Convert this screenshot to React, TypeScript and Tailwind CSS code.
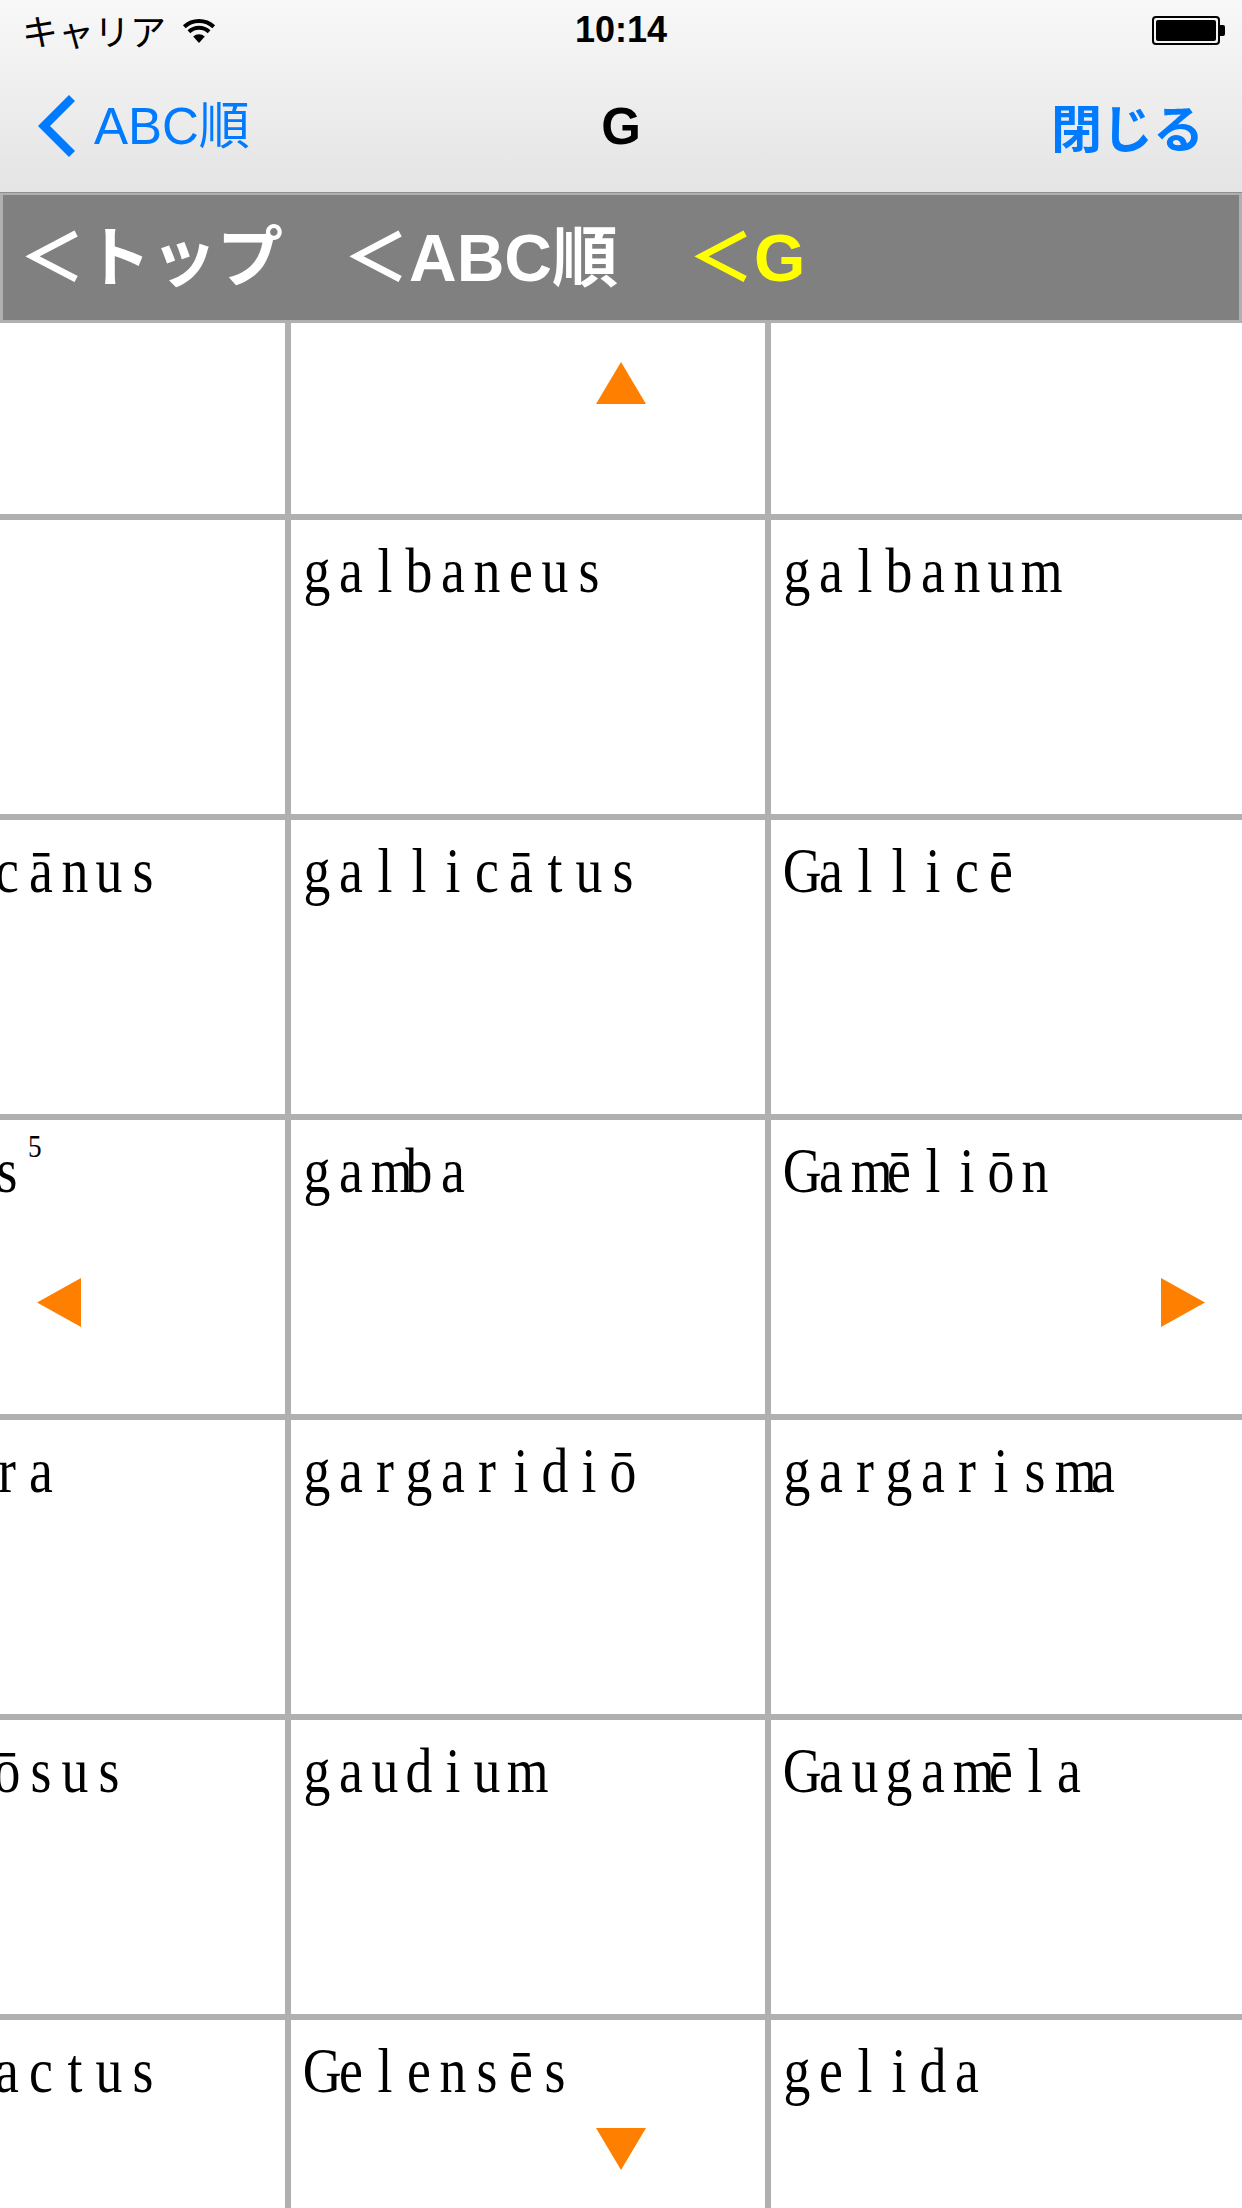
import React from "react";

const rows: { words: [string, string, string]; sup?: boolean }[] = [
  { words: ["galbanus", "galbaneus", "galbanum"] },
  { words: ["Gallicānus", "gallicātus", "Gallicē"] },
  { words: ["Gallus", "gamba", "Gamēliōn"], sup: true },
  { words: ["Gargara", "gargaridiō", "gargarisma"] },
  { words: ["gaudiōsus", "gaudium", "Gaugamēla"] },
  { words: ["gelefactus", "Gelensēs", "gelida"] },
];

function Word({ text, sup }: { text: string; sup?: boolean }) {
  return (
    <div className="whitespace-nowrap text-[64px] leading-none text-black [font-family:'Liberation_Serif',serif]">
      {Array.from(text).map((c, i) => (
        <span key={i} className="inline-block w-[34px] scale-x-[0.84] text-center">
          {c}
        </span>
      ))}
      {sup ? (
        <span className="relative -top-[9px] inline-block align-top text-[32px] leading-none pl-[3px] scale-x-[0.85]">5</span>
      ) : null}
    </div>
  );
}

function Cell({ text, sup }: { text?: string; sup?: boolean }) {
  return (
    <div className="h-full w-[474px] shrink-0 bg-white pl-[9px] pt-[19px] overflow-hidden">
      {text ? <Word text={text} sup={sup} /> : null}
    </div>
  );
}

function Wifi() {
  return (
    <svg width="38" height="28" viewBox="0 0 38 28">
      <path d="M19 27 L13.2 20.6 A8.6 8.6 0 0 1 24.8 20.6 Z" fill="#000" />
      <path d="M8.9 15.8 A14.8 14.8 0 0 1 29.1 15.8" stroke="#000" strokeWidth="4" fill="none" />
      <path d="M4.3 10.7 A21.5 21.5 0 0 1 33.7 10.7" stroke="#000" strokeWidth="4" fill="none" />
    </svg>
  );
}

export default function App() {
  return (
    <div className="relative flex h-[2208px] w-[1242px] flex-col overflow-hidden bg-white">
      {/* status + nav */}
      <div className="flex h-[193px] shrink-0 flex-col border-b border-[#8f8f8f] bg-gradient-to-b from-[#f8f8f8] to-[#e4e4e4]">
        <div className="relative flex h-[60px] items-center pl-[22px] pr-[17px]">
          <div className="flex items-center gap-[14px]">
            <span className="text-[36px] leading-none text-black [font-family:'Noto_Sans_CJK_JP',sans-serif]">キャリア</span>
            <Wifi />
          </div>
          <div className="flex-1" />
          <div className="flex items-center">
            <div className="h-[29px] w-[68px] rounded-[4px] border-[2px] border-black p-[2px]">
              <div className="h-full w-full rounded-[2px] bg-black" />
            </div>
            <div className="h-[11px] w-[5px] rounded-r-[2px] bg-black" />
          </div>
          <div className="absolute left-0 right-0 top-0 flex h-[60px] items-center justify-center">
            <span className="text-[36px] font-bold leading-none text-black [font-family:'Liberation_Sans',sans-serif]">10:14</span>
          </div>
        </div>
        <div className="relative flex h-[132px] items-center pl-[38px] pr-[38px]">
          <div className="flex items-center gap-[18px]">
            <svg width="38" height="62" viewBox="0 0 38 62">
              <polyline points="34,3 6,31 34,59" fill="none" stroke="#007aff" strokeWidth="8.5" strokeLinejoin="miter" />
            </svg>
            <span className="text-[51px] leading-none text-[#007aff] [font-family:'Liberation_Sans','Noto_Sans_CJK_JP',sans-serif]">ABC順</span>
          </div>
          <div className="flex-1" />
          <span className="text-[51px] font-bold leading-none text-[#007aff] [font-family:'Noto_Sans_CJK_JP',sans-serif]">閉じる</span>
          <div className="absolute inset-0 flex items-center justify-center">
            <span className="text-[51px] font-bold leading-none text-black [font-family:'Liberation_Sans',sans-serif]">G</span>
          </div>
        </div>
      </div>

      {/* breadcrumb */}
      <div className="flex h-[130px] shrink-0 items-center border-x-[3px] border-b-[3px] border-t-2 border-[#b0b0b0] bg-[#808080] pl-[16px] text-[66px] font-bold leading-none [font-family:'Liberation_Sans','Noto_Sans_CJK_JP',sans-serif]">
        <span className="text-white">＜トップ</span>
        <span className="ml-[60px] text-white">＜ABC順</span>
        <span className="ml-[70px] text-[#ffff00]">＜G</span>
      </div>

      {/* grid */}
      <div className="flex-1 overflow-hidden bg-[#b0b0b0]">
        <div className="ml-[-189px] flex w-[1434px] flex-col gap-[6px]">
          <div className="flex h-[191px] gap-[6px]">
            <Cell />
            <Cell />
            <Cell />
          </div>
          {rows.map((r, i) => (
            <div key={i} className="flex h-[294px] shrink-0 gap-[6px]">
              <Cell text={i === 0 ? undefined : r.words[0]} sup={r.sup} />
              <Cell text={r.words[1]} />
              <Cell text={r.words[2]} />
            </div>
          ))}
        </div>
      </div>

      {/* scroll arrows */}
      <svg className="absolute left-[596px] top-[362px]" width="50" height="42" viewBox="0 0 50 42">
        <polygon points="25,0 50,42 0,42" fill="#ff8000" />
      </svg>
      <svg className="absolute left-[596px] top-[2128px]" width="50" height="42" viewBox="0 0 50 42">
        <polygon points="0,0 50,0 25,42" fill="#ff8000" />
      </svg>
      <svg className="absolute left-[37px] top-[1278px]" width="44" height="49" viewBox="0 0 44 49">
        <polygon points="0,24.5 44,0 44,49" fill="#ff8000" />
      </svg>
      <svg className="absolute left-[1161px] top-[1278px]" width="44" height="49" viewBox="0 0 44 49">
        <polygon points="0,0 44,24.5 0,49" fill="#ff8000" />
      </svg>
    </div>
  );
}
